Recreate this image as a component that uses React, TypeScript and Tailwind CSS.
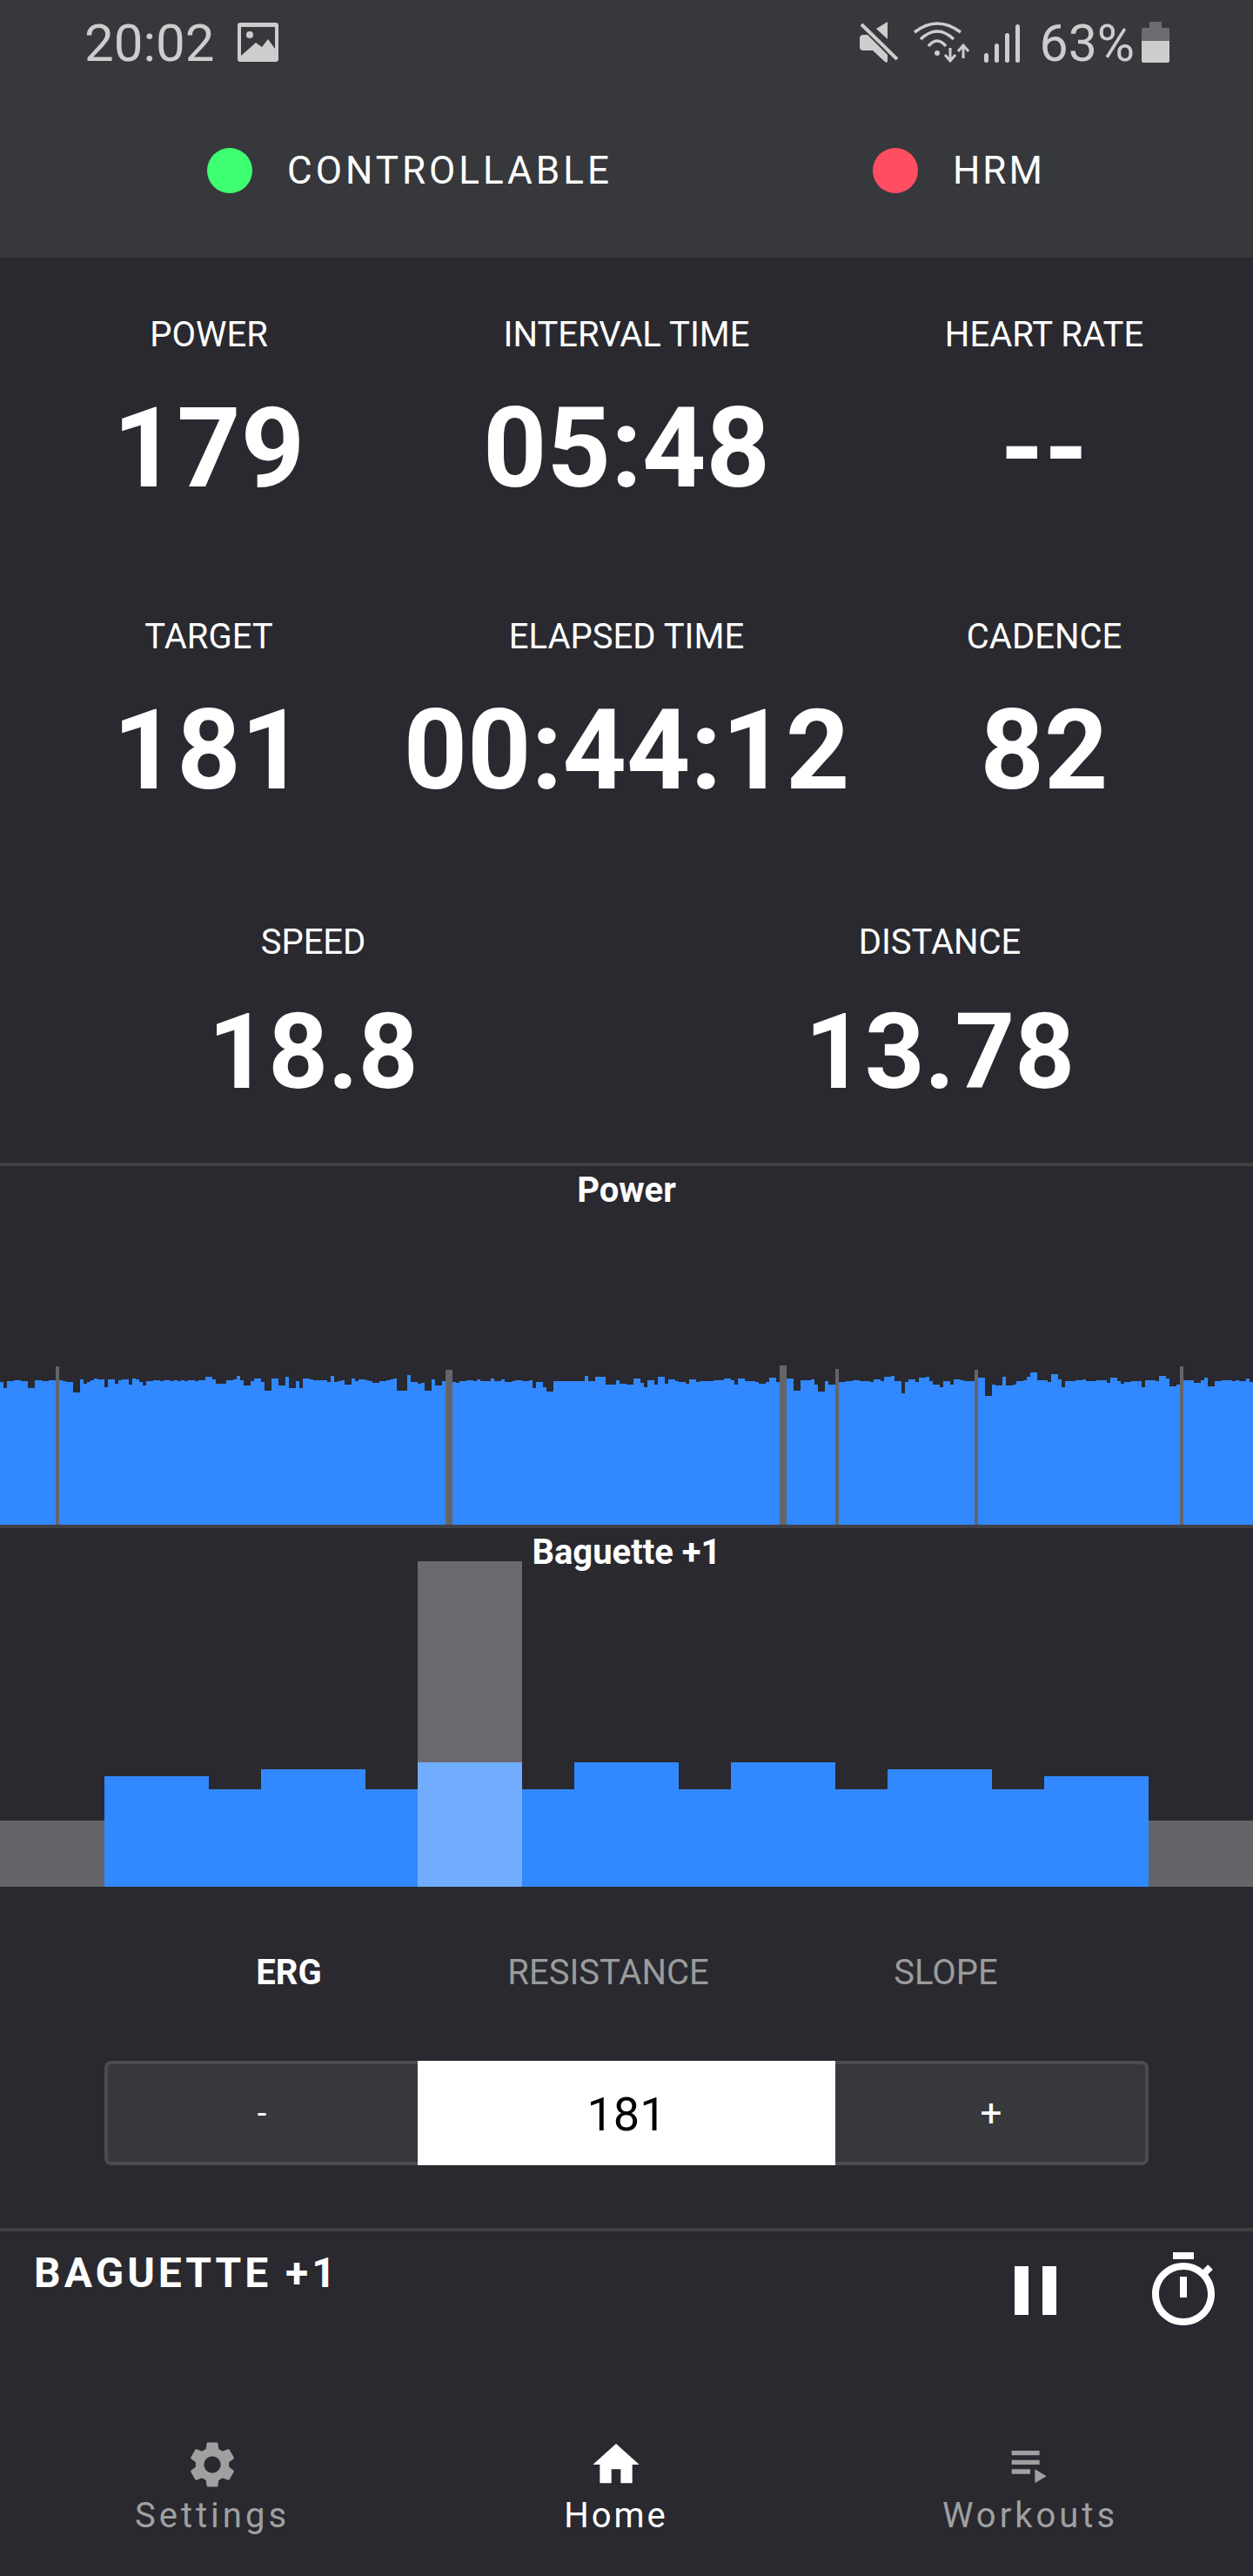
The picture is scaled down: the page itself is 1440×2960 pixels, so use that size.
import type { ReactNode } from 'react';

// top edge of each 4px power bar, in 1/3 px above the chart's own origin
const POWER_TOPS = [
  84, 104, 81, 81, 78, 78, 81, 81, 104, 104, 78, 78, 81, 81, 78, 78, 81, 78, 81, 84, 84, 120, 120, 75, 90, 84, 78, 72, 75, 75,
  102, 75, 75, 90, 78, 75, 75, 93, 72, 75, 84, 96, 81, 81, 78, 78, 81, 78, 78, 81, 78, 81, 78, 81, 78, 78, 81, 78, 78, 66,
  66, 75, 90, 90, 90, 78, 78, 75, 63, 78, 96, 96, 81, 72, 72, 84, 114, 114, 72, 72, 96, 96, 66, 105, 105, 81, 105, 72, 72, 75,

  78, 78, 78, 78, 84, 63, 84, 81, 78, 93, 93, 72, 81, 75, 75, 78, 81, 87, 87, 81, 81, 78, 75, 72, 114, 114, 114, 60, 84, 84,
  90, 87, 114, 114, 75, 96, 96, 81, 81, 81, 84, 87, 81, 81, 78, 78, 81, 75, 81, 81, 81, 72, 81, 81, 75, 84, 84, 81, 78, 78,
  81, 81, 78, 105, 84, 84, 102, 117, 117, 81, 81, 81, 81, 81, 81, 81, 81, 81, 63, 81, 81, 66, 66, 66, 93, 93, 93, 78, 90, 90,

  93, 93, 72, 72, 87, 102, 78, 78, 93, 66, 66, 90, 75, 75, 81, 84, 84, 90, 75, 75, 84, 81, 81, 81, 81, 78, 78, 78, 72, 72,
  78, 93, 72, 72, 81, 81, 81, 84, 90, 90, 84, 69, 69, 84, 81, 81, 72, 72, 114, 114, 78, 78, 78, 75, 93, 117, 117, 81, 93, 93,
  93, 84, 84, 81, 81, 78, 78, 81, 81, 81, 84, 75, 75, 81, 66, 66, 63, 81, 81, 123, 84, 75, 75, 84, 69, 69, 66, 81, 93, 93,

  102, 81, 81, 93, 75, 75, 78, 81, 81, 81, 81, 69, 69, 132, 132, 93, 96, 96, 66, 96, 96, 93, 81, 81, 78, 66, 51, 51, 78, 78,
  78, 84, 57, 57, 75, 102, 81, 81, 81, 78, 78, 75, 81, 81, 81, 78, 78, 78, 87, 69, 69, 81, 90, 84, 84, 81, 81, 81, 102, 78,
  78, 78, 81, 63, 63, 72, 99, 99, 93, 93, 78, 78, 78, 87, 87, 78, 69, 99, 99, 81, 81, 78, 78, 78, 81, 78, 81, 81, 72, 84,
];

const POWER_MARKERS = [
  { x: 64, w: 4, top: 10 },
  { x: 512, w: 8, top: 14 },
  { x: 896, w: 8, top: 9 },
  { x: 960, w: 4, top: 13 },
  { x: 1120, w: 4, top: 14 },
  { x: 1356, w: 4, top: 10 },
];

const powerPath =
  'M0 192' + POWER_TOPS.map((t, i) => `V${t / 3}H${(i + 1) * 4}`).join('') + 'V192Z';

const INTERVALS = [
  { w: 120, h: 76, color: 'bg-[#646569]' },
  { w: 120, h: 127 },
  { w: 60, h: 112 },
  { w: 120, h: 135 },
  { w: 60, h: 112 },
  { w: 120, h: 143, active: true },
  { w: 60, h: 112 },
  { w: 120, h: 143 },
  { w: 60, h: 112 },
  { w: 120, h: 143 },
  { w: 60, h: 112 },
  { w: 120, h: 135 },
  { w: 60, h: 112 },
  { w: 120, h: 127 },
  { w: 120, h: 76, color: 'bg-[#646569]' },
];

function Stat({ label, value, small }: { label: string; value: string; small?: boolean }) {
  return (
    <div className="flex flex-col items-center">
      <div className="flex h-[60px] items-center text-[40px] text-white">{label}</div>
      <div
        className={`${small ? 'mt-[26px] text-[120px]' : 'mt-[30px] text-[128px]'} flex h-[140px] items-center font-bold leading-none text-white`}
      >
        {value}
      </div>
    </div>
  );
}

function NavItem({ label, active, children }: { label: string; active?: boolean; children: ReactNode }) {
  return (
    <div className={`flex flex-col items-center ${active ? 'text-white' : 'text-[#a0a0a0]'}`}>
      {children}
      <span className={`mt-[2px] text-[40px] leading-[50px] ${active ? 'tracking-[3px]' : 'tracking-[4px]'}`}>{label}</span>
    </div>
  );
}

function StatusBar() {
  return (
    <div className="flex h-[100px] items-start justify-between pl-[97px] pr-[96px] text-[#cdcdcd]">
      <div className="flex items-center gap-[27px] pt-[18px]">
        <span className="text-[60px] leading-[64px]">20:02</span>
        <svg width="47" height="45" viewBox="0 0 47 45" className="mt-[-3px]">
          <rect width="47" height="45" rx="3" fill="#cdcdcd" />
          <path d="M4 5H43V30L35 19L28 28L21 23L4 38Z" fill="#36383c" />
          <circle cx="14" cy="14" r="4" fill="#cdcdcd" />
        </svg>
      </div>
      <div className="flex items-start pt-[25px]">
        <svg width="44" height="48" viewBox="0 0 44 48" fill="#cdcdcd">
          <path d="M4 15H9L32 38V45Q32 48 29 46L15 33H4Q0 33 0 29V19Q0 15 4 15Z" />
          <path d="M32 0V20L19 8Z" />
          <path d="M2 3L43 43" stroke="#cdcdcd" strokeWidth="4" />
        </svg>
        <svg width="64" height="48" viewBox="0 0 64 48" fill="none" stroke="#cdcdcd" strokeWidth="3.5" className="ml-[18px]">
          <path d="M1 12Q27 -8 54 12" />
          <path d="M8 20Q27 2 46 20" />
          <path d="M17 28Q27 16 37 28" />
          <circle cx="27" cy="36" r="3" fill="#cdcdcd" stroke="none" />
          <path d="M42 30V45M36 38L42 45L48 38" strokeWidth="3" />
          <path d="M57 42V27M51 34L57 27L63 34" strokeWidth="3" />
        </svg>
        <svg width="41" height="44" viewBox="0 0 41 44" fill="#cdcdcd" className="ml-[17px] mt-[3px]">
          <rect x="0" y="33" width="5" height="11" rx="2.5" />
          <rect x="12" y="22" width="5" height="22" rx="2.5" />
          <rect x="24" y="10" width="5" height="34" rx="2.5" />
          <rect x="36" y="0" width="5" height="44" rx="2.5" />
        </svg>
        <span className="ml-[22px] mt-[-7px] text-[59px] leading-[64px]">63%</span>
        <svg width="32" height="47" viewBox="0 0 32 47" className="ml-[8px]">
          <path d="M9 0H23V7H30Q32 7 32 9V22H0V9Q0 7 2 7H9Z" fill="#6b6c70" />
          <path d="M0 22H32V45Q32 47 30 47H2Q0 47 0 45Z" fill="#cdcdcd" />
        </svg>
      </div>
    </div>
  );
}

export default function App() {
  return (
    <div className="flex h-[2960px] w-[1440px] flex-col overflow-hidden bg-[#29292f] font-['Roboto',sans-serif]">
      <header className="h-[296px] shrink-0 bg-[#36383c]">
        <StatusBar />
        <div className="flex items-center pt-[70px]">
          <span className="ml-[238px] h-[52px] w-[52px] rounded-full bg-[#3dff6f]" />
          <span className="ml-[40px] text-[44px] leading-[52px] tracking-[4px] text-white">CONTROLLABLE</span>
          <span className="ml-[299px] h-[52px] w-[52px] rounded-full bg-[#ff4d61]" />
          <span className="ml-[40px] text-[44px] leading-[52px] tracking-[3px] text-white">HRM</span>
        </div>
      </header>

      <section className="h-[1040px] shrink-0 pt-[59px]">
        <div className="grid grid-cols-3">
          <Stat label="POWER" value="179" />
          <Stat label="INTERVAL TIME" value="05:48" />
          <Stat label="HEART RATE" value="--" />
        </div>
        <div className="mt-[117px] grid grid-cols-3">
          <Stat label="TARGET" value="181" />
          <Stat label="ELAPSED TIME" value="00:44:12" />
          <Stat label="CADENCE" value="82" />
        </div>
        <div className="mt-[121px] grid grid-cols-2">
          <Stat label="SPEED" value="18.8" small />
          <Stat label="DISTANCE" value="13.78" small />
        </div>
      </section>

      <section className="flex h-[420px] shrink-0 flex-col border-y-4 border-[#3f3f44]">
        <div className="pt-[6px] text-center text-[40px] font-bold leading-[44px] text-white">Power</div>
        <svg width="1440" height="192" viewBox="0 0 1440 192" className="mt-auto block">
          <path d={powerPath} fill="#3288ff" />
          {POWER_MARKERS.map((m) => (
            <rect key={m.x} x={m.x} y={m.top} width={m.w} height={192 - m.top} fill="#646569" />
          ))}
        </svg>
      </section>

      <section className="relative flex h-[412px] shrink-0 items-end">
        <div className="absolute inset-x-0 top-[6px] text-center text-[40px] font-bold leading-[44px] text-white">Baguette +1</div>
        {INTERVALS.map((bar, i) => (
          <div key={i} className="flex flex-col" style={{ width: bar.w }}>
            {bar.active && <div className="h-[231px] bg-[#69696e]" />}
            <div className={bar.active ? 'bg-[#71adff]' : bar.color ?? 'bg-[#3288ff]'} style={{ height: bar.h }} />
          </div>
        ))}
      </section>

      <div className="mx-[120px] grid h-[200px] shrink-0 grid-cols-[422px_312px_464px] items-center pl-[1px] pt-[1px] pb-[3px] text-[40px]">
        <span className="text-center font-bold text-white">ERG</span>
        <span className="text-center text-[#9b9b9b]">RESISTANCE</span>
        <span className="text-center text-[#9b9b9b]">SLOPE</span>
      </div>

      <div className="mx-[120px] flex h-[120px] shrink-0 text-white">
        <button type="button" className="w-[360px] rounded-l-[8px] border-y-4 border-l-4 border-[#4b4c50] bg-[#36383c] pr-[2px] text-[38px]">-</button>
        <div className="flex w-[480px] items-center justify-center bg-white pt-[2px] text-[54px] text-black">181</div>
        <button type="button" className="w-[360px] rounded-r-[8px] border-y-4 border-r-4 border-[#4b4c50] bg-[#36383c] pl-[2px] text-[44px]">+</button>
      </div>

      <section className="mt-[72px] flex flex-1 flex-col border-t-4 border-[#3f3f44]">
        <div className="flex items-start justify-between pl-[39px] pr-[32px] pt-[20px]">
          <span className="text-[48px] font-bold leading-[56px] tracking-[4px] text-white">BAGUETTE +1</span>
          <div className="flex gap-[74px]">
            <svg width="96" height="96" viewBox="0 0 24 24" fill="#fff">
              <path d="M6 19h4V5H6v14zm8-14v14h4V5h-4z" />
            </svg>
            <svg width="96" height="96" viewBox="0 0 24 24" fill="#fff">
              <path d="M15 1H9v2h6V1zm-4 13h2V8h-2v6zm8.03-6.61l1.42-1.42c-.43-.51-.9-.99-1.41-1.41l-1.42 1.42C16.07 4.74 14.12 4 12 4c-4.97 0-9 4.03-9 9s4.02 9 9 9 9-4.03 9-9c0-2.12-.74-4.07-1.97-5.61zM12 20c-3.87 0-7-3.13-7-7s3.13-7 7-7 7 3.13 7 7-3.13 7-7 7z" />
            </svg>
          </div>
        </div>
        <nav className="mt-[120px] grid grid-cols-[488px_440px_512px]">
          <NavItem label="Settings">
            <svg width="64" height="64" viewBox="0 0 24 24" fill="currentColor">
              <path d="M19.14 12.94c.04-.3.06-.61.06-.94 0-.32-.02-.64-.07-.94l2.03-1.58c.18-.14.23-.41.12-.61l-1.92-3.32c-.12-.22-.37-.29-.59-.22l-2.39.96c-.5-.38-1.03-.7-1.62-.94l-.36-2.54c-.04-.24-.24-.41-.48-.41h-3.84c-.24 0-.43.17-.47.41l-.36 2.54c-.59.24-1.13.57-1.62.94l-2.39-.96c-.22-.08-.47 0-.59.22L2.74 8.87c-.12.21-.08.47.12.61l2.03 1.58c-.05.3-.09.63-.09.94s.02.64.07.94l-2.03 1.58c-.18.14-.23.41-.12.61l1.92 3.32c.12.22.37.29.59.22l2.39-.96c.5.38 1.03.7 1.62.94l.36 2.54c.05.24.24.41.48.41h3.84c.24 0 .44-.17.47-.41l.36-2.54c.59-.24 1.13-.56 1.62-.94l2.39.96c.22.08.47 0 .59-.22l1.92-3.32c.12-.22.07-.47-.12-.61l-2.01-1.58zM12 15.6c-1.98 0-3.6-1.62-3.6-3.6s1.62-3.6 3.6-3.6 3.6 1.62 3.6 3.6-1.62 3.6-3.6 3.6z" />
            </svg>
          </NavItem>
          <NavItem label="Home" active>
            <svg width="64" height="64" viewBox="0 0 24 24" fill="currentColor">
              <path d="M10 20v-6h4v6h5v-8h3L12 3 2 12h3v8z" />
            </svg>
          </NavItem>
          <NavItem label="Workouts">
            <svg width="64" height="64" viewBox="0 0 24 24" fill="currentColor">
              <path d="M4 10h12v2H4zm0-4h12v2H4zm0 8h8v2H4zm10 0v6l5-3z" />
            </svg>
          </NavItem>
        </nav>
      </section>
    </div>
  );
}
